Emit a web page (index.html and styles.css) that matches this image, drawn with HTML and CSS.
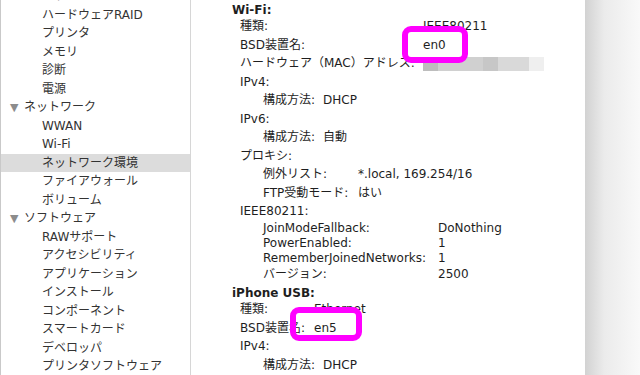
FILE: index.html
```html
<!DOCTYPE html>
<html lang="ja">
  <head>
    <meta charset="utf-8" />
    <meta name="viewport" content="width=device-width, initial-scale=1" />
    <title>システム情報 - ネットワーク環境</title>
    <link rel="stylesheet" href="styles.css">
  </head>
  <body>
    <div class="window">
      <nav class="sidebar">
        <ul class="tree">
          <li>パラレルSCSI</li>
          <li>ハードウェアRAID</li>
          <li>プリンタ</li>
          <li>メモリ</li>
          <li>診断</li>
          <li>電源</li>
          <li class="parent"><span class="arrow">▼</span>ネットワーク</li>
          <li>WWAN</li>
          <li>Wi-Fi</li>
          <li class="selected">ネットワーク環境</li>
          <li>ファイアウォール</li>
          <li>ボリューム</li>
          <li class="parent"><span class="arrow">▼</span>ソフトウェア</li>
          <li>RAWサポート</li>
          <li>アクセシビリティ</li>
          <li>アプリケーション</li>
          <li>インストール</li>
          <li>コンポーネント</li>
          <li>スマートカード</li>
          <li>デベロッパ</li>
          <li>プリンタソフトウェア</li>
        </ul>
      </nav>

      <main class="detail">
        <!-- Wi-Fi -->
        <section class="iface">
          <h2>Wi-Fi:</h2>
          <dl class="props cols-wifi">
            <dt>種類:</dt><dd>IEEE80211</dd>
            <dt>BSD装置名:</dt><dd>en0</dd>
            <dt>ハードウェア（MAC）アドレス:</dt><dd><span class="mac"></span></dd>
          </dl>
          <div class="group">
            <p class="group-title">IPv4:</p>
            <dl class="props cols-cfg"><dt>構成方法:</dt><dd>DHCP</dd></dl>
          </div>
          <div class="group">
            <p class="group-title">IPv6:</p>
            <dl class="props cols-cfg"><dt>構成方法:</dt><dd>自動</dd></dl>
          </div>
          <div class="group">
            <p class="group-title">プロキシ:</p>
            <dl class="props cols-proxy">
              <dt>例外リスト:</dt><dd>*.local, 169.254/16</dd>
              <dt>FTP受動モード:</dt><dd>はい</dd>
            </dl>
          </div>
          <div class="group">
            <p class="group-title">IEEE80211:</p>
            <dl class="props cols-ieee">
              <dt>JoinModeFallback:</dt><dd>DoNothing</dd>
              <dt>PowerEnabled:</dt><dd>1</dd>
              <dt>RememberJoinedNetworks:</dt><dd>1</dd>
              <dt class="tall">バージョン:</dt><dd class="tall">2500</dd>
            </dl>
          </div>
        </section>

        <!-- iPhone USB -->
        <section class="iface">
          <h2>iPhone USB:</h2>
          <dl class="props cols-usb">
            <dt>種類:</dt><dd>Ethernet</dd>
            <dt>BSD装置名:</dt><dd>en5</dd>
          </dl>
          <div class="group">
            <p class="group-title">IPv4:</p>
            <dl class="props cols-cfg"><dt>構成方法:</dt><dd>DHCP</dd></dl>
          </div>
        </section>

        <div class="mark mark-en0"></div>
        <div class="mark mark-en5"></div>
      </main>

      <div class="shadow"></div>
    </div>
  </body>
</html>
```

FILE: styles.css
```css
* {
  box-sizing: border-box;
}
body {
  margin: 0;
  background: #fff;
  color: #1e1e1e;
  font-family: "DejaVu Sans", "Noto Sans CJK JP", sans-serif;
  font-size: 12px;
  overflow: hidden;
}
.window {
  display: flex;
  height: 375px;
}

/* sidebar tree */
.sidebar {
  flex: none;
  width: 191px;
  border-left: 1px solid #c9c9c9;
  border-right: 1px solid #d6d6d6;
  overflow: hidden;
}
.tree {
  list-style: none;
  margin: -12.75px 0 0;
  padding: 0;
}
.tree li {
  height: 18.5px;
  line-height: 18.5px;
  padding-left: 41px;
  color: #333;
  white-space: nowrap;
}
.tree li.parent {
  padding-left: 9px;
}
.tree li.selected {
  background: #dcdcdc;
}
.arrow {
  display: inline-block;
  width: 14px;
  color: #8c8c8c;
  font-size: 11px;
}

/* detail pane */
.detail {
  flex: 1;
  position: relative;
  padding: 3px 0 0 41px;
}
.iface h2 {
  margin: 0;
  font-size: 12px;
  font-weight: 700;
  line-height: 14px;
}
.iface + .iface h2 {
  margin-top: 4px;
}
.props {
  display: grid;
  margin: 0;
  padding-left: 8px;
}
.props dt,
.props dd {
  margin: 0;
  line-height: 18.5px;
  white-space: nowrap;
}
.group {
  padding-left: 8px;
}
.group-title {
  margin: 0;
  line-height: 18.5px;
}
.group .props {
  padding-left: 23px;
}
.cols-wifi {
  grid-template-columns: 183px auto;
}
.cols-usb {
  grid-template-columns: 74px auto;
}
.cols-cfg {
  grid-template-columns: 60px auto;
}
.cols-proxy {
  grid-template-columns: 95px auto;
}
.cols-ieee {
  grid-template-columns: 175px auto;
}
.cols-ieee dt,
.cols-ieee dd {
  line-height: 15px;
}
.cols-ieee .tall {
  line-height: 16.5px;
}

/* pixelated MAC address */
.mac {
  display: inline-block;
  width: 121px;
  height: 14px;
  vertical-align: middle;
  background: linear-gradient(to right, #bdbdbd 0 15px, #d0d0d0 15px 60px, #c7c7c7 60px 75px, #d9d9d9 75px 106px, #efefef 106px);
}

/* annotation boxes */
.mark {
  position: absolute;
  border: 6px solid #f0f;
  border-radius: 9px;
}
.mark-en0 {
  left: 211px;
  top: 26px;
  width: 66px;
  height: 37px;
}
.mark-en5 {
  left: 99px;
  top: 307px;
  width: 72px;
  height: 34px;
}

.shadow {
  flex: none;
  width: 55px;
  background: linear-gradient(to right, #d2d2d2, #ebebeb 35%, #f9f9f9);
}
```
